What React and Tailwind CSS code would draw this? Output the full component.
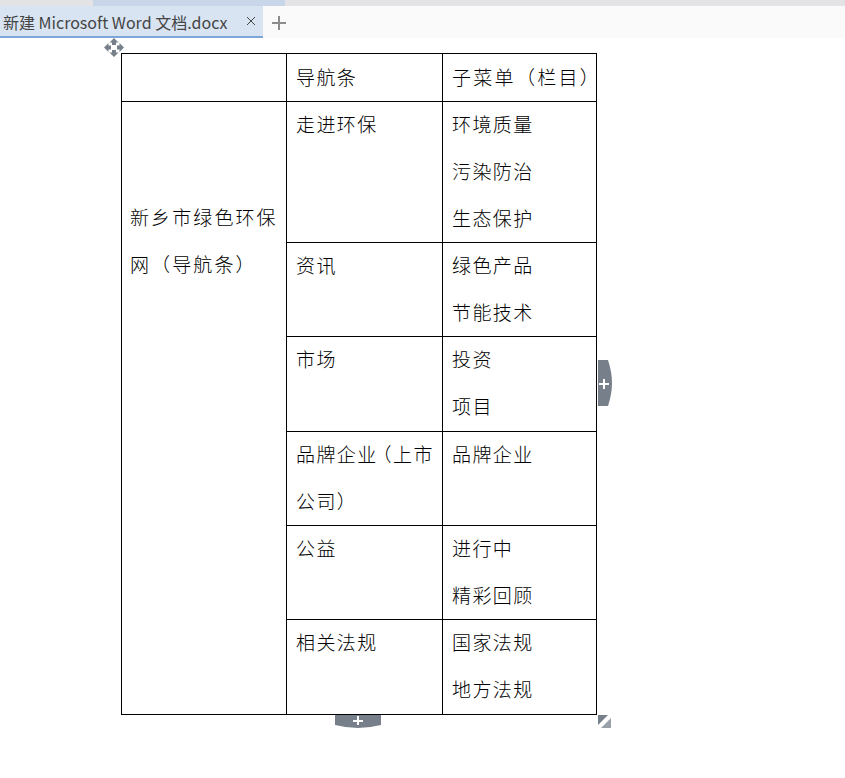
const cjk = "font-['Noto_Sans_CJK_SC',sans-serif]"

const rows = [
  { nav: ['走进环保'], subs: ['环境质量', '污染防治', '生态保护'], h: 'h-[141px]' },
  { nav: ['资讯'], subs: ['绿色产品', '节能技术'], h: 'h-[94px]' },
  { nav: ['市场'], subs: ['投资', '项目'], h: 'h-[95px]' },
  { nav: [<>品牌企<span className="tracking-[-3.6px]">业</span>（上市</>, '公司）'], subs: ['品牌企业'], h: 'h-[94px]' },
  { nav: ['公益'], subs: ['进行中', '精彩回顾'], h: 'h-[94px]' },
  { nav: ['相关法规'], subs: ['国家法规', '地方法规'], h: 'h-[95px]' },
]

function Lines({ items }) {
  return (
    <div className="mb-[-3px]">
      {items.map((t, i) => (
        <div key={i} className="h-[47px] leading-[43px] whitespace-nowrap">{t}</div>
      ))}
    </div>
  )
}

function MoveHandle() {
  return (
    <svg width="22" height="20" viewBox="0 0 22 20" className="absolute left-[103px] top-[37px]" fill="#77808a">
      <path d="M11 1l4.500 4.500H13V8H9V5.500H6.500z" />
      <path d="M11 20l4.500-4.500H13V13H9v2.500H6.500z" />
      <path d="M1 10.500l4.500-4.500v2.500H8v4H5.500V15z" />
      <path d="M21 10.500L16.500 6v2.500H14v4h2.500V15z" />
    </svg>
  )
}

export default function App() {
  return (
    <div className={`relative h-[778px] w-[845px] overflow-hidden bg-white ${cjk}`}>
      {/* top strip */}
      <div className="flex h-[6px] bg-[#e3e3e5]">
        <div className="ml-[93px] w-[192px] bg-[#c9d5e8]" />
      </div>

      {/* tab bar */}
      <div className="flex h-[32px] bg-[#fafafa]">
        <div className="flex w-[263px] items-center border-b-2 border-[#7ea6d9] bg-[#d9e4f2] pl-[3px] text-[16px] text-[#444]">
          <span className="mt-[1px] whitespace-nowrap">新建 Microsoft Word 文档.docx</span>
          <svg width="10" height="10" viewBox="0 0 10 10" className="ml-auto mr-[7px]" stroke="#444" strokeWidth="1">
            <path d="M1 1l8 8M9 1l-8 8" />
          </svg>
        </div>
        <svg width="14" height="14" viewBox="0 0 14 14" className="ml-[9px] mt-[10px]" stroke="#8c8c8c" strokeWidth="2">
          <path d="M7 0v14M0 7h14" />
        </svg>
      </div>

      {/* document table */}
      <table className="ml-[121px] mt-[15px] w-[475px] table-fixed border-collapse text-[19px] font-light tracking-[1.4px] text-black">
        <colgroup>
          <col className="w-[165px]" />
          <col className="w-[156px]" />
          <col className="w-[154px]" />
        </colgroup>
        <tbody>
          <tr className="h-[48px]">
            <td className="border border-black" />
            <td className="border border-black pl-[9px] align-top leading-[45px]">导航条</td>
            <td className="border border-black pl-[9px] align-top leading-[45px] tracking-[2.3px] whitespace-nowrap">子菜单（栏目）</td>
          </tr>
          {rows.map((r, i) => (
            <tr key={i} className={r.h}>
              {i === 0 && (
                <td rowSpan={6} className="border border-black px-[8px] pt-[93px] align-top tracking-[2.1px]">
                  <Lines items={['新乡市绿色环保', '网（导航条）']} />
                </td>
              )}
              <td className="border border-black pl-[9px] align-top">
                <Lines items={r.nav} />
              </td>
              <td className="border border-black pl-[9px] align-top">
                <Lines items={r.subs} />
              </td>
            </tr>
          ))}
        </tbody>
      </table>

      {/* table handles */}
      <MoveHandle />
      <svg width="14" height="46" viewBox="0 0 14 46" className="absolute left-[598px] top-[360px]">
        <path d="M0 0h10q4 12 4 23t-4 23H0z" fill="#77808a" />
        <path d="M5 19h2v4h4v2H7v4H5v-4H1v-2h4z" fill="#fff" />
      </svg>
      <svg width="46" height="13" viewBox="0 0 46 13" className="absolute left-[335px] top-[715px]">
        <path d="M0 0h46v10q-12 3-23 3T0 10z" fill="#77808a" />
        <path d="M22 1h2v4h4v2h-4v3h-2V7h-4V5h4z" fill="#fff" />
      </svg>
      <svg width="13" height="13" viewBox="0 0 13 13" className="absolute left-[598px] top-[715px]" fill="#77808a">
        <path d="M0 0h10L0 10z" />
        <path d="M13 3v10H3z" fill="#9aa1a8" />
      </svg>
    </div>
  )
}
